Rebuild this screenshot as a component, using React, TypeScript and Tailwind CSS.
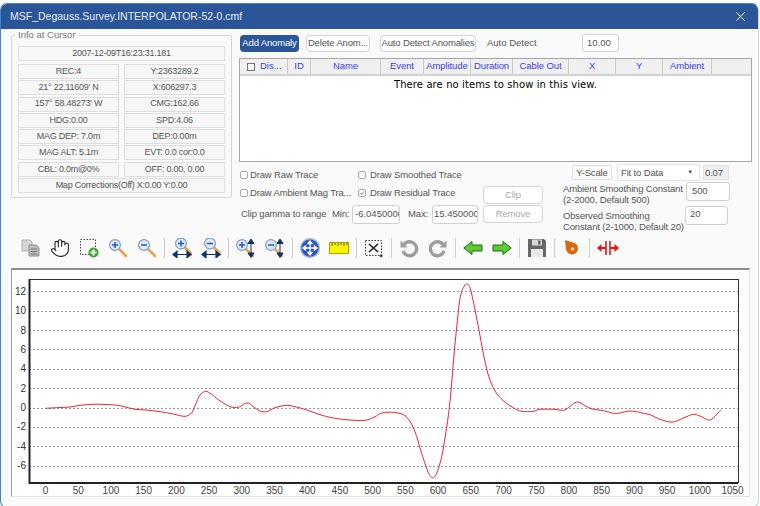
import { Hand } from 'lucide-react';
import type { ReactNode } from 'react';

const ui = "font-['Liberation_Sans',sans-serif]";

const infoRows = [
  ['REC:4', 'Y:2363289.2'],
  ["21° 22.11609' N", 'X:606297.3'],
  ["157° 58.48273' W", 'CMG:162.66'],
  ['HDG:0.00', 'SPD:4.06'],
  ['MAG DEP: 7.0m', 'DEP:0.00m'],
  ['MAG ALT: 5.1m', 'EVT: 0.0 cor:0.0'],
  ['CBL: 0.0m@0%', 'OFF: 0.00, 0.00'],
];

const columns: [string, string][] = [
  ['ID', 'w-[23px]'],
  ['Name', 'w-[70px]'],
  ['Event', 'w-[43px]'],
  ['Amplitude', 'w-[47px]'],
  ['Duration', 'w-[42px]'],
  ['Cable Out', 'w-[56px]'],
  ['X', 'w-[47px]'],
  ['Y', 'w-[47px]'],
  ['Ambient', 'w-[49px]'],
];

// trace read off the plot, in pixels of the chart panel's page coordinates
const traceLeft: [number, number][] = [
  [137, 430], [170, 428], [210, 426], [240, 421], [280, 418], [330, 419], [365, 423], [405, 433],
  [440, 435], [480, 440], [520, 447], [555, 454], [575, 443], [590, 410], [600, 390], [617, 379],
  [635, 388], [655, 404], [690, 425], [715, 427], [730, 418], [745, 414], [760, 425], [780, 438],
  [800, 440], [825, 428], [860, 421], [885, 425], [920, 435], [960, 449], [1000, 459], [1050, 465],
  [1095, 466], [1125, 455],
];
const traceRight: [number, number][] = [
  [0, 446], [20, 442], [50, 443], [75, 452], [95, 478], [110, 515], [125, 565], [140, 610],
  [150, 632], [160, 638], [170, 625], [185, 575], [198, 500], [210, 410], [222, 270], [232, 170],
  [240, 100], [250, 68], [262, 57], [272, 75], [285, 135], [298, 200], [310, 265], [325, 330],
  [345, 378], [370, 407], [400, 428], [425, 439], [460, 439], [480, 433], [520, 433], [550, 436],
  [565, 428], [585, 413], [600, 413], [630, 430], [670, 437], [700, 445], [720, 444], [745, 438],
  [770, 440], [790, 445], [810, 449], [840, 463], [870, 471], [890, 468], [915, 457], [940, 448],
  [960, 453], [985, 465], [1000, 459], [1022, 435],
];

const tracePoints = [
  ...traceLeft.map(([x, y]) => [x / 3 - 11, 265 + y / 3 - 270]),
  ...traceRight.map(([x, y]) => [380 + x / 3 - 11, 265 + y / 3 - 270]),
];

function smoothPath(pts: number[][]) {
  let d = `M${pts[0][0]} ${pts[0][1]}`;
  for (let i = 0; i < pts.length - 1; i++) {
    const p0 = pts[Math.max(i - 1, 0)];
    const p1 = pts[i];
    const p2 = pts[i + 1];
    const p3 = pts[Math.min(i + 2, pts.length - 1)];
    const c1x = p1[0] + (p2[0] - p0[0]) / 6;
    const c1y = p1[1] + (p2[1] - p0[1]) / 6;
    const c2x = p2[0] - (p3[0] - p1[0]) / 6;
    const c2y = p2[1] - (p3[1] - p1[1]) / 6;
    d += ` C${c1x.toFixed(1)} ${c1y.toFixed(1)} ${c2x.toFixed(1)} ${c2y.toFixed(1)} ${p2[0].toFixed(1)} ${p2[1].toFixed(1)}`;
  }
  return d;
}

function Chart() {
  const yTicks = [12, 10, 8, 6, 4, 2, 0, -2, -4, -6];
  const xTicks = Array.from({ length: 22 }, (_, i) => i * 50);
  const yOf = (v: number) => 137.5 - v * 9.67;
  const xOf = (v: number) => 34.5 + v * 0.6543;
  return (
    <svg width="738" height="227" viewBox="0 0 738 227" className="block -ml-[1px]">
      {yTicks.map((v) => (
        <g key={v}>
          <line x1="18" x2="727" y1={Math.round(yOf(v)) + 0.5} y2={Math.round(yOf(v)) + 0.5} stroke="#999" strokeDasharray="2 2" />
          <text x="15" y={yOf(v) + 3.5} textAnchor="end" fontSize="10" fill="#333" fontFamily="Liberation Sans, sans-serif">{v}</text>
        </g>
      ))}
      {xTicks.map((v) => (
        <text key={v} x={xOf(v)} y="224" textAnchor="middle" fontSize="10" fill="#444" fontFamily="Liberation Sans, sans-serif">{v}</text>
      ))}
      <rect x="18.5" y="9.5" width="709" height="203" fill="none" stroke="#333" />
      <path d="M18.5 9v204H727" fill="none" stroke="#222" strokeWidth="2" />
      <path d={smoothPath(tracePoints)} fill="none" stroke="#f0202c" strokeWidth="1" />
    </svg>
  );
}

function Cell({ children, className = '' }: { children: ReactNode; className?: string }) {
  return (
    <div className={`h-[15px] flex items-center justify-center border border-[#dedede] bg-[#f7f7f7] text-[9px] tracking-[-0.25px] text-[#555] whitespace-nowrap ${className}`}>
      {children}
    </div>
  );
}

function Btn({ children, className = '' }: { children: ReactNode; className?: string }) {
  return (
    <div className={`flex items-center justify-center rounded-[4px] border border-[#d4d4d4] bg-white text-[9.5px] tracking-[-0.15px] whitespace-nowrap ${className}`}>
      {children}
    </div>
  );
}

function Field({ children, className = '' }: { children: ReactNode; className?: string }) {
  return (
    <div className={`flex items-start rounded-[3px] border border-[#d0d0d0] bg-white text-[9.5px] text-[#555] whitespace-nowrap overflow-hidden ${className}`}>
      {children}
    </div>
  );
}

function Check({ label, checked, className = '' }: { label: string; checked?: boolean; className?: string }) {
  return (
    <div className={`flex items-center text-[9.5px] tracking-[-0.15px] text-[#555] whitespace-nowrap ${className}`}>
      <span className="w-[8px] h-[8px] shrink-0 rounded-[2px] border border-[#a8a8a8] bg-white flex items-center justify-center">
        {checked && (
          <svg width="8" height="8" viewBox="0 0 8 8">
            <path d="M1.5 4l2 2 3-4" fill="none" stroke="#555" strokeWidth="1" />
          </svg>
        )}
      </span>
      <span>{label}</span>
    </div>
  );
}

function Icon({ children }: { children: ReactNode }) {
  return (
    <svg width="20" height="20" viewBox="0 0 20 20" className="block shrink-0">
      {children}
    </svg>
  );
}

const Sep = () => <div className="w-px h-[20px] mx-[7px] bg-[#d0d0d0]" />;

function Lens({ plus, cx = 7, cy = 7 }: { plus: boolean; cx?: number; cy?: number }) {
  return (
    <g>
      <path d={`M${cx + 4.5} ${cy + 4.5}L${cx + 11} ${cy + 11}`} stroke="#eca24a" strokeWidth="2.6" strokeLinecap="round" />
      <circle cx={cx} cy={cy} r="5.4" fill="#dbe9fb" stroke="#7f9cc0" strokeWidth="1.2" />
      <path d={plus ? `M${cx - 3} ${cy}h6M${cx} ${cy - 3}v6` : `M${cx - 3} ${cy}h6`} stroke="#2b55c0" strokeWidth="1.5" />
    </g>
  );
}

const HArrow = () => (
  <path d="M1 16.500h18M5 13.200L1 16.500 5 19.800zM15 13.200l4 3.300-4 3.300z" fill="#12306e" stroke="#12306e" strokeWidth="1.2" />
);
const VArrow = () => (
  <path d="M15 3v15M12 5.500L15 1l3 4.500zM12 15l3 4.500 3-4.500z" fill="#12306e" stroke="#12306e" strokeWidth="1" />
);

function Toolbar() {
  return (
    <div className="flex items-center pl-[20px] h-[24px]">
      <div className="flex gap-[9px]">
        <Icon>
          <path d="M1 2h8l2 2v9H1z" fill="#d4d4d4" stroke="#b4b4b4" />
          <path d="M8 7h7l3 3v8H8z" fill="#bdbdbd" stroke="#8e8e8e" />
          <path d="M10 11h6M10 13.500h6M10 16h6" stroke="#777" />
        </Icon>
        <Hand size={20} strokeWidth={1.3} color="#222" fill="#fff" />
        <Icon>
          <rect x="1.500" y="1.500" width="15" height="15" fill="none" stroke="#444" strokeDasharray="1.500 1.500" />
          <circle cx="14.500" cy="14.500" r="5" fill="#43a32f" />
          <path d="M11.500 14.500h6M14.500 11.500v6" stroke="#fff" strokeWidth="2" />
        </Icon>
        <Icon><Lens plus /></Icon>
        <Icon><Lens plus={false} /></Icon>
      </div>
      <Sep />
      <div className="flex gap-[9px]">
        <Icon><Lens plus cx={9} cy={5.5} /><HArrow /></Icon>
        <Icon><Lens plus={false} cx={9} cy={5.5} /><HArrow /></Icon>
      </div>
      <Sep />
      <div className="flex gap-[9px]">
        <Icon><Lens plus cx={6} cy={7} /><VArrow /></Icon>
        <Icon><Lens plus={false} cx={6} cy={7} /><VArrow /></Icon>
      </div>
      <Sep />
      <div className="flex gap-[9px]">
        <Icon>
          <circle cx="10" cy="10" r="9.300" fill="#2a55cf" stroke="#a9b3bf" strokeWidth="1.400" />
          <path d="M10 3v14M3 10h14M10 3l-2 2.500h4zM10 17l-2-2.500h4zM3 10l2.500-2v4zM17 10l-2.500-2v4z" stroke="#fff" strokeWidth="1.300" fill="#fff" />
        </Icon>
        <Icon>
          <rect x="0.500" y="4.500" width="19" height="11" fill="#fbf400" stroke="#a8a400" />
          <path d="M3 5v3M6 5v2M9 5v3M12 5v2M15 5v3M18 5v2" stroke="#555" />
        </Icon>
      </div>
      <Sep />
      <Icon>
        <rect x="1.500" y="2.500" width="16" height="15" fill="none" stroke="#333" strokeDasharray="1.500 1.500" />
        <path d="M5 6l9 8M14 6l-9 8" stroke="#222" strokeWidth="1.600" />
        <path d="M17 16v3.500M15.500 18h3.500" stroke="#333" />
      </Icon>
      <Sep />
      <div className="flex gap-[9px]">
        <Icon>
          <path d="M5 6.500A7 7 0 1 1 4 13" fill="none" stroke="#9d9d9d" strokeWidth="3.400" />
          <path d="M1.500 2.500v7h7z" fill="#9d9d9d" />
        </Icon>
        <Icon>
          <path d="M15 6.500A7 7 0 1 0 16 13" fill="none" stroke="#9d9d9d" strokeWidth="3.400" />
          <path d="M18.500 2.500v7h-7z" fill="#9d9d9d" />
        </Icon>
      </div>
      <Sep />
      <div className="flex gap-[9px]">
        <Icon>
          <path d="M0.800 10L9 3.500V7h10v6H9v3.500z" fill="#5ecb32" stroke="#1d6b16" />
        </Icon>
        <Icon>
          <path d="M19.200 10L11 3.500V7H1v6h10v3.500z" fill="#5ecb32" stroke="#1d6b16" />
        </Icon>
      </div>
      <Sep />
      <Icon>
        <path d="M1 1h16l2 2v16H1z" fill="#666" />
        <rect x="5" y="1.500" width="10" height="6" fill="#d8d8d8" />
        <rect x="11" y="2.500" width="2.500" height="4" fill="#666" />
        <rect x="4" y="11" width="12" height="8" fill="#e8e8e8" />
      </Icon>
      <Sep />
      <Icon>
        <path d="M3 2l8 2.500a6 6 0 1 1-7 6.500z" fill="#d9670f" />
        <circle cx="10.500" cy="11" r="1.800" fill="#f5d9b8" />
      </Icon>
      <Sep />
      <svg width="22" height="20" viewBox="0 0 22 20" className="block shrink-0">
        <path d="M9 3v14M13 3v14" stroke="#ee1111" strokeWidth="1.600" />
        <path d="M0 10l4.500-4v3H9v2H4.500v3zM22 10l-4.500-4v3H13v2h4.500v3z" fill="#ee1111" />
      </svg>
    </div>
  );
}

export default function App() {
  return (
    <div className={`w-[760px] h-[506px] bg-white pt-[3px] overflow-hidden ${ui}`}>
      <div className="w-[759px] h-[505px] rounded-[7px] border border-[#3f86d8] border-r-[#c8d8ea] bg-[#fafafa] overflow-hidden">
        <div className="h-[25px] bg-[#2a5699] flex items-center justify-between pl-[9px] pr-[13px] text-[10.5px] text-[#e8eef8]">
          <span>MSF_Degauss.Survey.INTERPOLATOR-52-0.cmf</span>
          <svg width="9" height="9" viewBox="0 0 9 9">
            <path d="M.5.5l8 8M8.500.5l-8 8" stroke="#fff" />
          </svg>
        </div>

        <div className="flex pl-[10px] h-[207px]">
          <fieldset className="w-[221px] h-[169px] border border-[#d4d4d4] rounded-[2px] px-[6px] pt-[5px]">
            <legend className="-ml-[3px] px-[3px] text-[9.5px] leading-[12px] text-[#777]">Info at Cursor</legend>
            <Cell className="mb-[3px]">2007-12-09T16:23:31.181</Cell>
            <div className="grid grid-cols-2 gap-x-[5px] gap-y-[1.3px]">
              {infoRows.flat().map((t) => (
                <Cell key={t}>{t}</Cell>
              ))}
            </div>
            <Cell className="mt-[1px]">Map Corrections(Off) X:0.00 Y:0.00</Cell>
          </fieldset>

          <div className="ml-[7px] w-[513px]">
            <div className="flex items-center h-[18px] mt-[5px] pl-[1px] text-[#555]">
              <div className="w-[59px] h-[17px] flex items-center justify-center rounded-[4px] bg-[#2a5699] text-[9.5px] tracking-[-0.15px] text-white whitespace-nowrap">Add Anomaly</div>
              <Btn className="w-[64px] h-[17px] ml-[7px]">Delete Anom...</Btn>
              <Btn className="w-[96px] h-[17px] ml-[10px]">Auto Detect Anomalies</Btn>
              <span className="ml-[11px] w-[95px] text-[9.5px]">Auto Detect</span>
              <Field className="w-[37px] h-[18px] pl-[4px] pt-[1px]">10.00</Field>
            </div>

            <div className="mt-[6px] h-[104px] border border-[#a6a6a6] bg-white">
              <div className="flex h-[17px] bg-[#f0f0f0] border-b-2 border-[#d2d2d2]">
                <div className="w-[48px] flex items-center pl-[7px] border-r border-[#c8c8c8] text-[9.5px] text-[#3c3cf0]">
                  <span className="w-[8px] h-[8px] border border-[#777] bg-white mr-[5px]" />
                  Dis...
                </div>
                {columns.map(([name, w]) => (
                  <div key={name} className={`${w} flex items-center justify-center border-r border-[#c8c8c8] text-[9.5px] tracking-[-0.1px] text-[#3c3cf0] whitespace-nowrap`}>
                    {name}
                  </div>
                ))}
              </div>
              <div className="text-center font-['DejaVu_Sans',sans-serif] text-[10px] tracking-[0.1px] leading-[18px] text-black">
                There are no items to show in this view.
              </div>
            </div>

            <div className="flex mt-[4px]">
              <div className="w-[244px] pl-[1px]">
                <div className="flex h-[18px] items-center">
                  <Check label="Draw Raw Trace" className="w-[118px] gap-[2px]" />
                  <Check label="Draw Smoothed Trace" className="gap-[4px]" />
                </div>
                <div className="flex h-[18px] items-center">
                  <Check label="Draw Ambient Mag Tra..." className="w-[118px] gap-[2px]" />
                  <Check label="Draw Residual Trace" checked className="gap-[4px]" />
                </div>
                <div className="flex items-center h-[19px] mt-[3px] ml-[1px] text-[9.5px] text-[#555] whitespace-nowrap">
                  <span className="w-[91px] tracking-[-0.15px]">Clip gamma to range</span>
                  <span className="w-[20px] tracking-[-0.15px]">Min:</span>
                  <Field className="w-[48px] h-[19px] pl-[2px] pt-[1px]">-6.0450000</Field>
                  <span className="ml-[8px] w-[24px] tracking-[-0.15px]">Max:</span>
                  <Field className="w-[46px] h-[19px] pl-[1px] pt-[1px]">15.450000</Field>
                </div>
              </div>
              <div className="w-[60px] pt-[20px] flex flex-col gap-[1px]">
                <Btn className="h-[18px] text-[#aaa]">Clip</Btn>
                <Btn className="h-[18px] text-[#aaa]">Remove</Btn>
              </div>
              <div className="ml-[20px] -mt-[3px] w-[170px] text-[9.5px] tracking-[-0.15px] leading-[11px] text-[#555]">
                <div className="flex items-center h-[18px] pl-[9px]">
                  <span className="w-[40px] h-[15px] flex items-center justify-center border border-[#e2e2e2]">Y-Scale</span>
                  <div className="w-[83px] h-[17px] ml-[5px] flex items-center justify-between px-[3px] border border-[#e2e2e2] bg-white rounded-[2px]">
                    Fit to Data
                    <span className="text-[6px] mr-[3px]">▼</span>
                  </div>
                  <span className="w-[26px] h-[15px] ml-[3px] pl-[1px] bg-[#efefef] border border-[#e2e2e2] flex items-center">0.07</span>
                </div>
                <div className="flex mt-[1px]">
                  <div className="w-[123px] pt-[1px] whitespace-nowrap">Ambient Smoothing Constant<br />(2-2000, Default 500)</div>
                  <Field className="w-[44px] h-[19px] pl-[5px] pt-[2px]">500</Field>
                </div>
                <div className="flex mt-[1px]">
                  <div className="w-[122px] pt-[4px] whitespace-nowrap">Observed Smoothing<br />Constant (2-1000, Default 20)</div>
                  <Field className="w-[43px] h-[19px] pl-[4px] pt-[1px]">20</Field>
                </div>
              </div>
            </div>
          </div>
        </div>

        <Toolbar />

        <div className="ml-[10px] mt-[8px] w-[739px] h-[229px] bg-white border-t-2 border-l border-r border-b border-t-[#8c8c8c] border-l-[#9a9a9a] border-r-[#e4e4e4] border-b-[#e4e4e4]">
          <Chart />
        </div>
      </div>
    </div>
  );
}
